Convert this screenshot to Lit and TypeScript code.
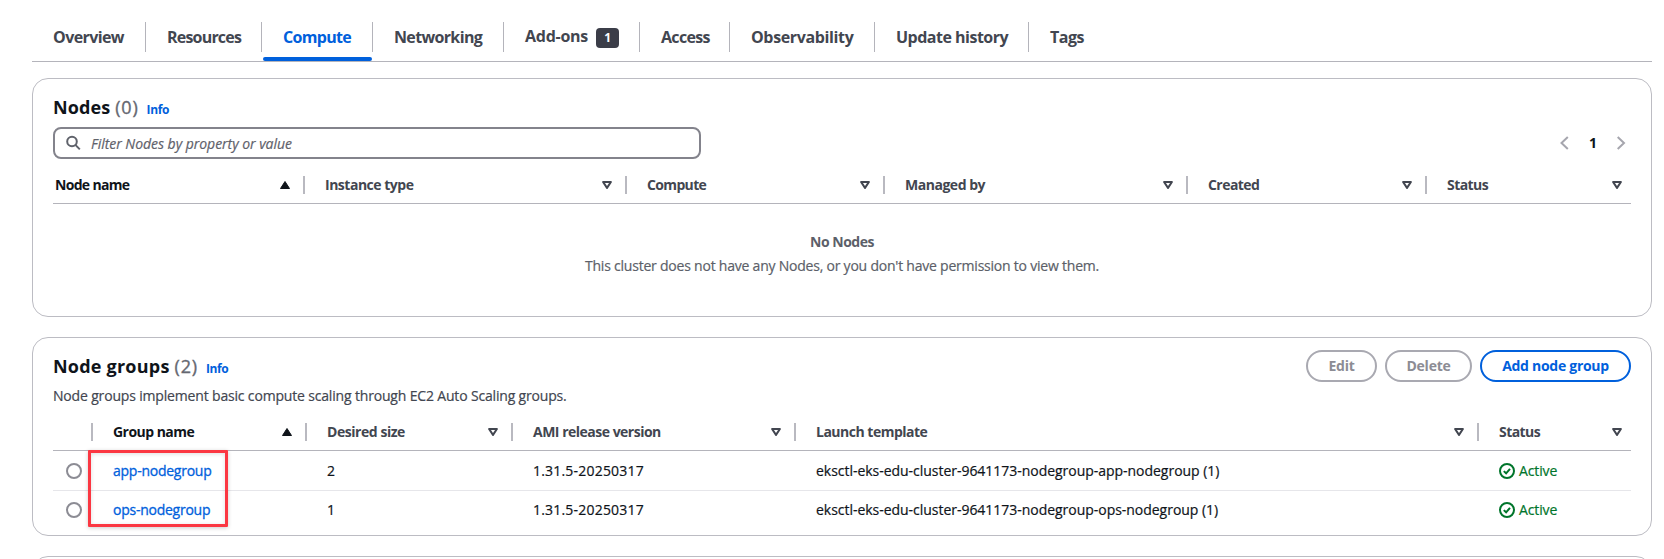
import { LitElement, html, css, svg } from "lit";
import { styleMap } from "lit/directives/style-map.js";

interface Label { text: string; tracking: number; }
interface Column extends Label { width: number; sort?: "asc" | "none"; }

const tabs: (Column & { active?: boolean; badge?: string })[] = [
  { text: "Overview", tracking: -0.6, width: 114 },
  { text: "Resources", tracking: -0.8, width: 116 },
  { text: "Compute", tracking: -0.7, width: 111, active: true },
  { text: "Networking", tracking: -0.65, width: 131 },
  { text: "Add-ons", tracking: -0.25, width: 136, badge: "1" },
  { text: "Access", tracking: -0.68, width: 90 },
  { text: "Observability", tracking: -0.36, width: 145 },
  { text: "Update history", tracking: -0.5, width: 154 },
  { text: "Tags", tracking: -0.5, width: 120 },
];

const nodeColumns: Column[] = [
  { text: "Node name", tracking: -0.68, width: 252, sort: "asc" },
  { text: "Instance type", tracking: -0.49, width: 322, sort: "none" },
  { text: "Compute", tracking: -0.65, width: 258, sort: "none" },
  { text: "Managed by", tracking: -0.47, width: 303, sort: "none" },
  { text: "Created", tracking: -0.55, width: 239, sort: "none" },
  { text: "Status", tracking: -0.55, width: 204, sort: "none" },
];

const groupColumns: Column[] = [
  { text: "", tracking: 0, width: 40 },
  { text: "Group name", tracking: -0.53, width: 214, sort: "asc" },
  { text: "Desired size", tracking: -0.45, width: 206, sort: "none" },
  { text: "AMI release version", tracking: -0.5, width: 283, sort: "none" },
  { text: "Launch template", tracking: -0.5, width: 683, sort: "none" },
  { text: "Status", tracking: -0.55, width: 152, sort: "none" },
];

const groups = [
  { name: "app-nodegroup", size: "2", version: "1.31.5-20250317", template: "eksctl-eks-edu-cluster-9641173-nodegroup-app-nodegroup (1)", status: "Active" },
  { name: "ops-nodegroup", size: "1", version: "1.31.5-20250317", template: "eksctl-eks-edu-cluster-9641173-nodegroup-ops-nodegroup (1)", status: "Active" },
];

const columnsOf = (cols: Column[]) => styleMap({ gridTemplateColumns: cols.map((c) => `${c.width}px`).join(" ") });
const tracked = (text: string, tracking: number, cls = "") =>
  html`<span class=${cls} style=${styleMap({ letterSpacing: `${tracking}px` })}>${text}</span>`;

const sortIcon = (kind: "asc" | "none") => html`<svg class="sort" width="10" height="8" viewBox="0 0 10 8">
  ${kind === "asc"
    ? svg`<path d="M5 .5 9.5 7.5H.5z" fill="currentColor" stroke="currentColor" stroke-linejoin="round"/>`
    : svg`<path d="M1.1 1h7.8L5 6.9z" fill="none" stroke="currentColor" stroke-width="2" stroke-linejoin="round"/>`}
</svg>`;

class AppRoot extends LitElement {
  static styles = css`
    :host { display: block; box-sizing: border-box; height: 559px; overflow: hidden; padding: 0 12px 0 32px; background: #fff;
      font: 400 14px/20px "Open Sans", "Noto Sans", sans-serif; color: #0f141a; white-space: nowrap; }
    * { box-sizing: border-box; }
    svg { display: block; flex: none; }
    .tabs { display: grid; height: 62px; padding-top: 22px; border-bottom: 1px solid #b4b4bb; }
    .tab { position: relative; display: flex; align-items: center; height: 30px; padding-left: 21px; border-right: 1px solid #b4b4bb;
      font-size: 16px; font-weight: 700; color: #424650; }
    .tab:last-child { border-right: 0; }
    .tab.active { color: #0060dc; }
    .tab.active::after { content: ""; position: absolute; left: 1px; right: 0; top: 35px; height: 4px; border-radius: 2px; background: #0060dc; }
    .tab.badged { padding-bottom: 2px; }
    .badge { width: 23px; height: 20px; margin: 6px 0 0 8px; border-radius: 4px; background: #3b3d48; color: #fff;
      font-size: 12px; line-height: 20px; text-align: center; align-self: flex-start; }
    .card { border: 1px solid #bcbcc3; border-radius: 16px; padding: 0 20px; }
    .nodes { margin-top: 16px; height: 239px; padding-top: 17px; }
    .groups { position: relative; margin-top: 20px; height: 199px; padding-top: 12px; }
    .next { margin-top: 20px; height: 60px; }
    .title { display: flex; align-items: baseline; height: 22px; font-size: 18px; line-height: 22px; font-weight: 700; }
    .count { margin-left: 5px; font-weight: 400; color: #656871; -webkit-text-stroke: 0.35px; }
    .info { margin-left: 8px; font-size: 12px; font-weight: 700; color: #0060dc; }
    .toolbar { display: flex; justify-content: space-between; align-items: center; margin-top: 9px; height: 32px; }
    .search { display: flex; align-items: center; width: 648px; height: 32px; border: 2px solid #83838c; border-radius: 8px;
      padding: 0 10px; gap: 10px; font-style: italic; color: #5f626b; -webkit-text-stroke: 0.2px; }
    .search span { padding-top: 1px; }
    .pages { display: flex; align-items: center; gap: 20px; padding-right: 5px; font-weight: 700; }
    .pages svg { color: #a6a6ae; }
    .pages span { width: 7px; text-align: center; }
    .head { display: grid; height: 37px; margin-top: 8px; border-bottom: 1px solid #b4b4bb; font-weight: 700; color: #424650; }
    .th { display: flex; align-items: center; padding-left: 20px; height: 36px; }
    .nodes .th:first-child { padding-left: 2px; }
    .th .sort { margin-left: auto; margin-right: 13px; }
    .th .sort:last-child { margin-right: 9px; }
    .th.sorted { color: #0f141a; }
    .bar { width: 2px; height: 18px; background: #b9b9c0; }
    .th .bar:only-child { margin-left: auto; }
    .empty { display: flex; flex-direction: column; align-items: center; gap: 4px; margin-top: 28px; color: #5c5f69; }
    .empty b { font-weight: 700; }
    .empty > span, .desc, .td { -webkit-text-stroke: 0.2px; }
    .titlebar { display: flex; justify-content: space-between; align-items: center; height: 32px; }
    .buttons { display: flex; gap: 8px; }
    .btn { height: 32px; border: 2px solid #a9a9b1; border-radius: 16px; line-height: 28px; text-align: center;
      font-weight: 700; color: #8c8c94; }
    .edit { width: 71px; }
    .delete { width: 87px; }
    .add { width: 151px; border-color: #0060dc; color: #0060dc; }
    .desc { margin-top: 4px; color: #424650; }
    .row { display: grid; height: 40px; border-bottom: 1px solid #e6e6ea; }
    .row.last { height: 38px; border-bottom: 0; }
    .td { display: flex; align-items: center; padding-left: 20px; }
    .pick { padding-left: 13px; }
    .radio { width: 16px; height: 16px; border: 2px solid #8c8c94; border-radius: 50%; }
    .td.link { color: #0060dc; -webkit-text-stroke: 0.3px; }
    .ok { gap: 4px; color: #00752b; }
    .marker { position: absolute; left: 55px; top: 112px; width: 140px; height: 77px; border: 3px solid #fb3742; border-radius: 1px;
      box-shadow: 0 1px 4px #0003, inset 0 1px 4px #0002; }
  `;

  head(cols: Column[]) {
    return html`<div class="head" style=${columnsOf(cols)}>${cols.map((c, i) => html`
      <div class="th ${c.sort === "asc" ? "sorted" : ""}">${c.text ? tracked(c.text, c.tracking) : ""}${c.sort ? sortIcon(c.sort) : ""}${
        i < cols.length - 1 ? html`<span class="bar"></span>` : ""}</div>`)}</div>`;
  }

  render() {
    return html`
      <nav class="tabs" style=${columnsOf(tabs)}>${tabs.map((t) => html`
        <div class="tab ${t.active ? "active" : ""} ${t.badge ? "badged" : ""}">${tracked(t.text, t.tracking)}${
          t.badge ? html`<span class="badge">${t.badge}</span>` : ""}</div>`)}</nav>

      <section class="card nodes">
        <div class="title">${tracked("Nodes", 0.1)}${tracked("(0)", 0.8, "count")}${tracked("Info", -0.35, "info")}</div>
        <div class="toolbar">
          <div class="search">
            <svg width="16" height="16" viewBox="0 0 16 16" fill="none" stroke="currentColor" stroke-width="2"><circle cx="7" cy="6.5" r="4.8"/><path d="m10.4 9.9 4.4 4.5"/></svg>
            ${tracked("Filter Nodes by property or value", -0.03)}
          </div>
          <div class="pages">
            <svg width="10" height="14" viewBox="0 0 10 14" fill="none" stroke="currentColor" stroke-width="2"><path d="M8.8 1 2.5 7l6.3 6"/></svg>
            <span>1</span>
            <svg width="10" height="14" viewBox="0 0 10 14" fill="none" stroke="currentColor" stroke-width="2"><path d="m1.7 1 6.3 6-6.3 6"/></svg>
          </div>
        </div>
        ${this.head(nodeColumns)}
        <div class="empty">
          <b>${tracked("No Nodes", -0.5)}</b>
          ${tracked("This cluster does not have any Nodes, or you don't have permission to view them.", -0.22)}
        </div>
      </section>

      <section class="card groups">
        <div class="titlebar">
          <div class="title">${tracked("Node groups", 0.22)}${tracked("(2)", 0.8, "count")}${tracked("Info", -0.35, "info")}</div>
          <div class="buttons">
            <div class="btn edit">${tracked("Edit", -0.2)}</div>
            <div class="btn delete">${tracked("Delete", -0.25)}</div>
            <div class="btn add">${tracked("Add node group", -0.28)}</div>
          </div>
        </div>
        <div class="desc">${tracked("Node groups implement basic compute scaling through EC2 Auto Scaling groups.", -0.17)}</div>
        ${this.head(groupColumns)}
        ${groups.map((g, i) => html`<div class="row ${i === groups.length - 1 ? "last" : ""}" style=${columnsOf(groupColumns)}>
          <div class="td pick"><span class="radio"></span></div>
          <div class="td link">${tracked(g.name, -0.25)}</div>
          <div class="td">${g.size}</div>
          <div class="td">${tracked(g.version, 0.2)}</div>
          <div class="td">${tracked(g.template, -0.03)}</div>
          <div class="td ok">
            <svg width="16" height="16" viewBox="0 0 16 16" fill="none" stroke="currentColor" stroke-width="2"><circle cx="8" cy="8" r="7"/><path d="m4.8 8.1 2.3 2.2 3.9-4.5"/></svg>
            ${tracked(g.status, -0.12)}
          </div>
        </div>`)}
        <div class="marker"></div>
      </section>

      <section class="card next"></section>
    `;
  }
}
customElements.define("app-root", AppRoot);
